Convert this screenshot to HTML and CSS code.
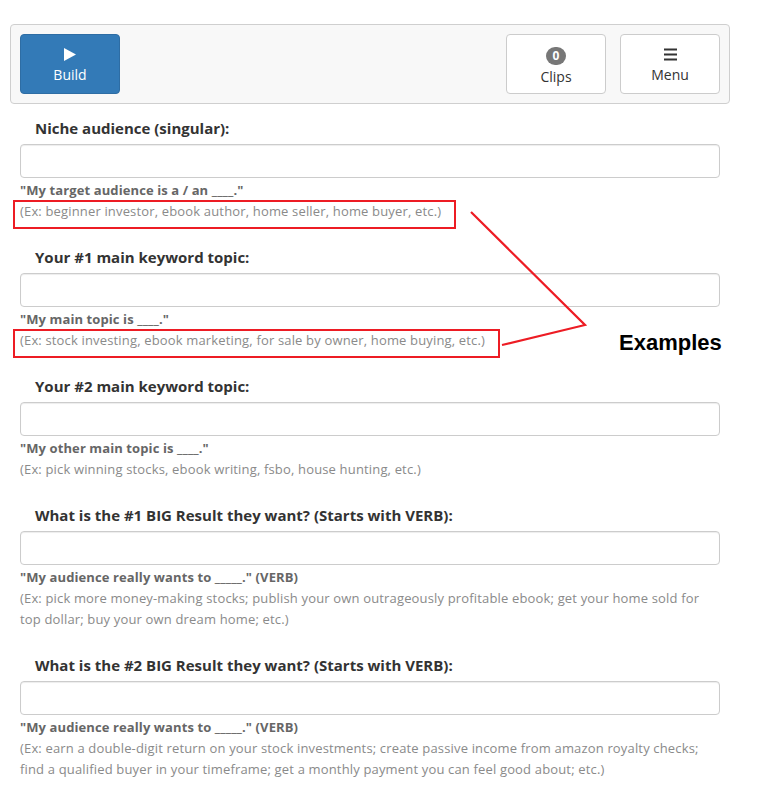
FILE: index.html
```html
<!DOCTYPE html>
<html>
<head>
<meta charset="utf-8">
<link rel="stylesheet" href="styles.css">
</head>
<body>
<div class="wrap">
  <div class="toolbar">
    <button class="tbtn primary">
      <svg class="ico" width="12" height="13" viewBox="0 0 12 13"><path d="M0 0 L12 6.5 L0 13 Z" fill="#fff"/></svg>
      <span>Build</span>
    </button>
    <div class="spacer"></div>
    <button class="tbtn">
      <span class="badge">0</span>
      <span>Clips</span>
    </button>
    <button class="tbtn">
      <svg class="ico" width="13" height="12" viewBox="0 0 13 12"><rect x="0" y="0" width="13" height="2" fill="#333"/><rect x="0" y="5" width="13" height="2" fill="#333"/><rect x="0" y="10" width="13" height="2" fill="#333"/></svg>
      <span>Menu</span>
    </button>
  </div>

  <div class="field">
    <div class="label">Niche audience (singular):</div>
    <input class="input" type="text">
    <div class="hint">"My target audience is a / an ____."</div>
    <div class="ex">(Ex: beginner investor, ebook author, home seller, home buyer, etc.)</div>
  </div>

  <div class="field">
    <div class="label">Your #1 main keyword topic:</div>
    <input class="input" type="text">
    <div class="hint">"My main topic is ____."</div>
    <div class="ex">(Ex: stock investing, ebook marketing, for sale by owner, home buying, etc.)</div>
  </div>

  <div class="field">
    <div class="label">Your #2 main keyword topic:</div>
    <input class="input" type="text">
    <div class="hint">"My other main topic is ____."</div>
    <div class="ex">(Ex: pick winning stocks, ebook writing, fsbo, house hunting, etc.)</div>
  </div>

  <div class="field">
    <div class="label">What is the #1 BIG Result they want? (Starts with VERB):</div>
    <input class="input" type="text">
    <div class="hint">"My audience really wants to _____." (VERB)</div>
    <div class="ex">(Ex: pick more money-making stocks; publish your own outrageously profitable ebook; get your home sold for top dollar; buy your own dream home; etc.)</div>
  </div>

  <div class="field">
    <div class="label">What is the #2 BIG Result they want? (Starts with VERB):</div>
    <input class="input" type="text">
    <div class="hint">"My audience really wants to _____." (VERB)</div>
    <div class="ex">(Ex: earn a double-digit return on your stock investments; create passive income from amazon royalty checks; find a qualified buyer in your timeframe; get a monthly payment you can feel good about; etc.)</div>
  </div>
</div>

<svg class="annot" width="757" height="797" viewBox="0 0 757 797">
  <rect x="14" y="201" width="441" height="27" fill="none" stroke="#ed1c24" stroke-width="2"/>
  <rect x="14" y="330" width="485" height="27" fill="none" stroke="#ed1c24" stroke-width="2"/>
  <polyline points="471,212 585,325 502,345" fill="none" stroke="#ed1c24" stroke-width="2.2"/>
</svg>
<div class="callout">Examples</div>
</body>
</html>
```

FILE: styles.css
```css
html, body {
  margin: 0;
  padding: 0;
  background: #fff;
}
body {
  font-family: "Open Sans", "DejaVu Sans", sans-serif;
  color: #333;
  position: relative;
  width: 757px;
  min-height: 797px;
  overflow: hidden;
}
.wrap {
  width: 720px;
  margin: 24px 0 0 10px;
}
.toolbar {
  box-sizing: border-box;
  height: 80px;
  border: 1px solid #cfcfcf;
  border-radius: 4px;
  background: #f8f8f8;
  padding: 9px;
  display: flex;
  gap: 14px;
}
.spacer { flex: 1; }
.tbtn {
  box-sizing: border-box;
  width: 100px;
  height: 60px;
  border: 1px solid #ccc;
  border-radius: 4px;
  background: #fff;
  color: #333;
  font-family: "Open Sans", sans-serif;
  font-size: 14px;
  display: flex;
  flex-direction: column;
  align-items: center;
  justify-content: flex-start;
  padding: 12px 0 0;
  margin: 0;
  line-height: 18px;
}
.tbtn.primary {
  background: #337ab7;
  border-color: #2e6da4;
  color: #fff;
}
.tbtn .ico {
  display: block;
  height: 13px;
  margin: 1px 0 5px;
}
.badge {
  display: block;
  box-sizing: border-box;
  min-width: 20px;
  height: 18px;
  border-radius: 9px;
  background: #777;
  color: #fff;
  font-size: 12px;
  font-weight: 700;
  line-height: 18px;
  text-align: center;
  padding: 0 6px;
  margin: 0 0 3px;
}
.field {
  padding: 0 10px;
  margin-top: 14px;
}
.field + .field { margin-top: 25px; }
.label {
  font-size: 15px;
  font-weight: 700;
  color: #333;
  line-height: 20px;
  padding-left: 15px;
  margin-bottom: 6px;
}
.input {
  display: block;
  box-sizing: border-box;
  width: 700px;
  height: 34px;
  border: 1px solid #ccc;
  border-radius: 4px;
  box-shadow: inset 0 1px 1px rgba(0,0,0,.075);
  margin: 0;
  padding: 6px 12px;
}
.hint {
  font-size: 13px;
  font-weight: 700;
  color: #666;
  line-height: 20px;
  margin-top: 2px;
  letter-spacing: 0.1px;
}
.ex {
  font-size: 13px;
  color: #8a8a8a;
  line-height: 21px;
  margin-top: 1px;
  letter-spacing: 0.16px;
}
.annot {
  position: absolute;
  left: 0;
  top: 0;
  pointer-events: none;
}
.callout {
  position: absolute;
  left: 619px;
  top: 329px;
  font-family: "Liberation Sans", Arial, sans-serif;
  font-size: 22px;
  font-weight: 700;
  color: #000;
  line-height: 28px;
}
```
